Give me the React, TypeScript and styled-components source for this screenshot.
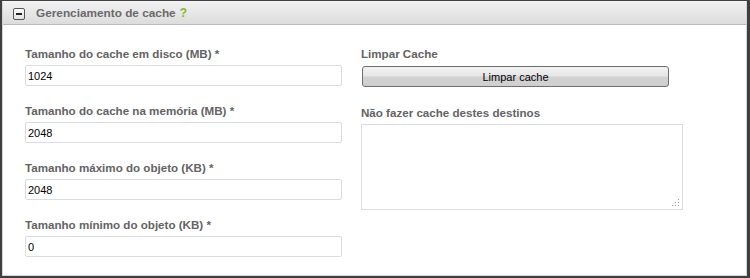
import React from "react";
import styled, { createGlobalStyle } from "styled-components";

const Global = createGlobalStyle`
  html, body { margin: 0; padding: 0; background: #ffffff; }
  body { width: 750px; height: 278px; overflow: hidden; font-family: "Liberation Sans", Arial, sans-serif; }
  * { box-sizing: border-box; }
`;

const Frame = styled.div`
  width: 750px;
  height: 278px;
  border-style: solid;
  border-color: #3f3f3f;
  border-width: 1px 3px 3px 2px;
  background: #fff;
  display: flex;
  flex-direction: column;
`;

const Panel = styled.div`
  flex: 1;
  border: 1px solid #d4d4d4;
  border-top-color: #f6f6f6;
  display: flex;
  flex-direction: column;
`;

const Header = styled.div`
  height: 23px;
  display: flex;
  align-items: center;
  padding-left: 10px;
  background: linear-gradient(#f1f1f1, #dcdcdc);
  border-bottom: 1px solid #b9b9b9;
`;

const Toggle = styled.span`
  width: 12px;
  height: 12px;
  border: 1px solid #555;
  border-radius: 2px;
  background: linear-gradient(#fafafa, #e2e2e2);
  display: flex;
  align-items: center;
  justify-content: center;
  margin-right: 11px;
  margin-top: 1px;
  &::after {
    content: "";
    width: 6px;
    height: 2px;
    background: #222;
  }
`;

const Title = styled.span`
  font-size: 11.8px;
  font-weight: bold;
  color: #6a6a6a;
`;

const Help = styled.span`
  color: #8db32a;
  font-weight: bold;
  font-size: 12px;
  margin-left: 4px;
`;

const Body = styled.div`
  display: grid;
  grid-template-columns: 317px 322px;
  column-gap: 19px;
  padding: 22px 0 0 22px;
`;

const Column = styled.div`
  display: flex;
  flex-direction: column;
`;

const Field = styled.div<{ $gap?: number }>`
  display: flex;
  flex-direction: column;
  margin-bottom: ${(p) => p.$gap ?? 18}px;
`;

const Label = styled.label`
  font-size: 11.6px;
  font-weight: bold;
  color: #636363;
  line-height: 14px;
  margin-bottom: 4px;
`;

const Input = styled.input`
  width: 317px;
  height: 21px;
  border: 1px solid #d9dde3;
  border-radius: 2px;
  padding: 0 2px;
  font-family: "Liberation Sans", Arial, sans-serif;
  font-size: 11px;
  color: #000;
  outline: none;
`;

const Button = styled.button<{ $width: number }>`
  width: ${(p) => p.$width}px;
  height: 21px;
  margin: 1px 0 0 1px;
  border: 1px solid #6f6f6f;
  border-radius: 3px;
  background: linear-gradient(#f2f2f2 0%, #e6e6e6 45%, #d2d2d2 55%, #cfcfcf 100%);
  font-family: "Liberation Sans", Arial, sans-serif;
  font-size: 11px;
  color: #000;
  padding: 0;
`;

const TextArea = styled.div`
  width: 322px;
  height: 86px;
  border: 1px solid #d9dde3;
  position: relative;
`;

const Grip = styled.svg`
  position: absolute;
  right: 2px;
  bottom: 2px;
`;

const fields = [
  { label: "Tamanho do cache em disco (MB)", value: "1024" },
  { label: "Tamanho do cache na memória (MB)", value: "2048" },
  { label: "Tamanho máximo do objeto (KB)", value: "2048" },
  { label: "Tamanho mínimo do objeto (KB)", value: "0" },
];

export default function App() {
  return (
    <>
      <Global />
      <Frame>
        <Panel>
          <Header>
            <Toggle />
            <Title>
              Gerenciamento de cache<Help>?</Help>
            </Title>
          </Header>
          <Body>
            <Column>
              {fields.map((f) => (
                <Field key={f.label}>
                  <Label>{f.label} *</Label>
                  <Input defaultValue={f.value} readOnly />
                </Field>
              ))}
            </Column>
            <Column>
              <Field $gap={19}>
                <Label>Limpar Cache</Label>
                <Button $width={307}>Limpar cache</Button>
              </Field>
              <Field>
                <Label>Não fazer cache destes destinos</Label>
                <TextArea>
                  <Grip width="8" height="8" viewBox="0 0 8 8">
                    <g fill="#9a9a9a">
                      <rect x="6" y="0" width="1" height="1" />
                      <rect x="3" y="3" width="1" height="1" />
                      <rect x="6" y="3" width="1" height="1" />
                      <rect x="0" y="6" width="1" height="1" />
                      <rect x="3" y="6" width="1" height="1" />
                      <rect x="6" y="6" width="1" height="1" />
                    </g>
                  </Grip>
                </TextArea>
              </Field>
            </Column>
          </Body>
        </Panel>
      </Frame>
    </>
  );
}
